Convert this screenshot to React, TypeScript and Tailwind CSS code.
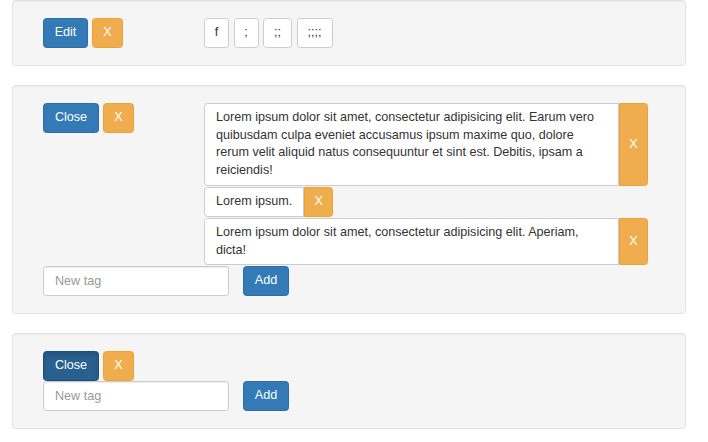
import type { ReactNode } from 'react'

const font = { fontFamily: '"Liberation Sans", Helvetica, Arial, sans-serif' }

type Variant = 'primary' | 'warning' | 'default' | 'active'

const variantClass: Record<Variant, string> = {
  primary: 'bg-[#337ab7] border-[#2e6da4] text-white',
  warning: 'bg-[#f0ad4e] border-[#eea236] text-white',
  default: 'bg-white border-[#ccc] text-[#333]',
  active: 'bg-[#286090] border-[#204d74] text-white shadow-[inset_0_3px_5px_rgba(0,0,0,0.125)]',
}

function Btn({ variant, children, className = '' }: { variant: Variant; children: ReactNode; className?: string }) {
  return (
    <button
      className={`inline-flex h-[30px] items-center justify-center rounded-[3.5px] border px-[9px] text-[12.6px] leading-[17.6px] ${variantClass[variant]} ${className}`}
    >
      {children}
    </button>
  )
}

function Tag({ text }: { text: string }) {
  return (
    <div className="flex max-w-[444px] items-stretch">
      <div className="rounded-l-[3.5px] border border-[#ccc] bg-white px-[11px] py-[5.2px] text-[12.6px] leading-[17.6px] text-[#333]">
        {text}
      </div>
      <button className="flex w-[29px] shrink-0 items-center justify-center rounded-r-[3.5px] border border-[#eea236] bg-[#f0ad4e] text-[12.6px] text-white">
        X
      </button>
    </div>
  )
}

function NewTag() {
  return (
    <div className="flex items-center gap-[14px]">
      <input
        className="h-[30px] w-[186px] rounded-[3.5px] border border-[#ccc] bg-white px-[11px] text-[12.6px] text-[#555] shadow-[inset_0_1px_1px_rgba(0,0,0,0.075)] outline-none placeholder:text-[#999]"
        placeholder="New tag"
      />
      <Btn variant="primary" className="w-[46px]">Add</Btn>
    </div>
  )
}

function Well({ children }: { children: ReactNode }) {
  return (
    <div className="ml-[12px] mb-[19px] w-[674px] rounded-[3.5px] border border-[#e3e3e3] bg-[#f5f5f5] px-[30px] py-[17px] shadow-[inset_0_1px_1px_rgba(0,0,0,0.05)]">
      {children}
    </div>
  )
}

const tags = [
  'Lorem ipsum dolor sit amet, consectetur adipisicing elit. Earum vero quibusdam culpa eveniet accusamus ipsum maxime quo, dolore rerum velit aliquid natus consequuntur et sint est. Debitis, ipsam a reiciendis!',
  'Lorem ipsum.',
  'Lorem ipsum dolor sit amet, consectetur adipisicing elit. Aperiam, dicta!',
]

export default function App() {
  return (
    <div className="min-h-screen bg-white" style={font}>
      {/* editing toolbar */}
      <Well>
        <div className="flex">
          <div className="flex w-[161px] gap-[4px]">
            <Btn variant="primary" className="w-[45px]">Edit</Btn>
            <Btn variant="warning" className="w-[31px]">X</Btn>
          </div>
          <div className="flex gap-[4.5px]">
            <Btn variant="default" className="w-[25px] px-0">f</Btn>
            <Btn variant="default" className="w-[25px] px-0">;</Btn>
            <Btn variant="default" className="w-[29px] px-0">;;</Btn>
            <Btn variant="default" className="w-[36px] px-0">;;;;</Btn>
          </div>
        </div>
      </Well>

      {/* open with tags */}
      <Well>
        <div className="flex">
          <div className="flex w-[161px] items-start gap-[4px]">
            <Btn variant="primary" className="w-[56px]">Close</Btn>
            <Btn variant="warning" className="w-[31px]">X</Btn>
          </div>
          <div className="flex flex-col items-start gap-px">
            {tags.map(t => <Tag key={t} text={t} />)}
          </div>
        </div>
        <div className="mt-[1px]">
          <NewTag />
        </div>
      </Well>

      {/* open, empty */}
      <Well>
        <div className="flex gap-[4px]">
          <Btn variant="active" className="w-[56px]">Close</Btn>
          <Btn variant="warning" className="w-[31px]">X</Btn>
        </div>
        <NewTag />
      </Well>
    </div>
  )
}
